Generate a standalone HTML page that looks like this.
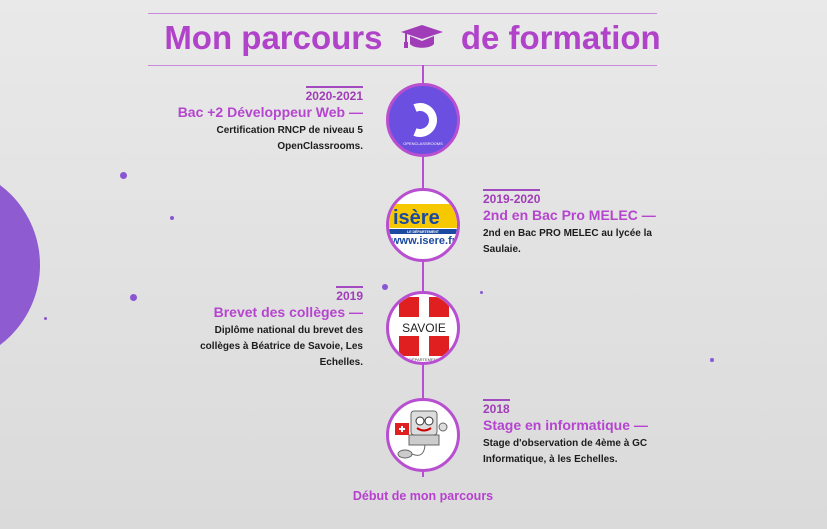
<!DOCTYPE html>
<html><head><meta charset="utf-8"><style>
*{margin:0;padding:0;box-sizing:border-box}
body{width:827px;height:529px;overflow:hidden;position:relative;background:linear-gradient(#e9e9e9,#dadada);font-family:"Liberation Sans",sans-serif}
.a{position:absolute}
.hl{position:absolute;left:148px;width:509px;height:1px;background:#c88ad8}
h1{position:absolute;left:108px;width:609px;top:19px;text-align:center;color:#b043c9;font-size:33px;font-weight:bold;white-space:nowrap;line-height:38px}
.vl{position:absolute;left:422px;top:65px;width:2px;height:412px;background:#b84fd0}
.c{position:absolute;width:74px;height:74px;border-radius:50%;border:3px solid #b84fd0;background:#fff;left:386px;overflow:hidden}
.dot{position:absolute;border-radius:50%;background:#8a55d2}
.t{position:absolute;width:200px}
.t.r{text-align:right}
.bar{display:block;width:57px;height:2px;background:#a24ac0;margin-bottom:1px}
.t.r .bar{margin-left:auto}
.y{color:#a03cb8;font-weight:bold;font-size:12px;line-height:14px}
.h{color:#b545cf;font-size:14px;font-weight:bold;line-height:18px}
.d{color:#1c1c1c;font-size:10px;font-weight:bold;line-height:16px;margin-top:2px}
</style></head><body>
<div class="a" style="left:-160px;top:165px;width:200px;height:200px;border-radius:50%;background:#8e5bd0"></div>
<div class="dot" style="left:120px;top:172px;width:7px;height:7px"></div>
<div class="dot" style="left:170px;top:216px;width:4px;height:4px"></div>
<div class="dot" style="left:130px;top:294px;width:7px;height:7px"></div>
<div class="dot" style="left:44px;top:317px;width:3px;height:3px"></div>
<div class="dot" style="left:382px;top:284px;width:6px;height:6px"></div>
<div class="dot" style="left:480px;top:291px;width:3px;height:3px"></div>
<div class="dot" style="left:710px;top:358px;width:4px;height:4px"></div>
<div class="hl" style="top:13px"></div>
<div class="hl" style="top:65px"></div>
<h1>Mon parcours <svg width="44" height="28" viewBox="0 0 44 28" style="vertical-align:-2px;margin:0 8px"><path d="M22 2 L43 9 L22 16 L1 9Z" fill="#a03cb8"/><path d="M10 13 V21 C14 26 30 26 34 21 V13 L22 18Z" fill="#a03cb8"/><path d="M6 10 V20" stroke="#a03cb8" stroke-width="2"/><rect x="4" y="19" width="4" height="6" fill="#a03cb8"/></svg> de formation</h1>
<div class="vl"></div>

<div class="c" style="top:83px;background:#6b4fe0"><svg width="68" height="68" viewBox="0 0 68 68"><path d="M26 22 A13 13 0 1 1 26 46" stroke="#fff" stroke-width="8" fill="none"/><text x="34" y="59" font-size="4" fill="#fff" text-anchor="middle" font-family="Liberation Sans">OPENCLASSROOMS</text></svg></div>
<div class="c" style="top:188px"><svg width="68" height="68" viewBox="0 0 68 68"><rect x="0" y="13" width="68" height="24" fill="#f5c800"/><text x="4" y="33" font-size="20" font-weight="bold" fill="#1b4aa0" font-family="Liberation Sans">isère</text><rect x="0" y="38" width="68" height="5" fill="#1b4aa0"/><text x="34" y="42" font-size="3.5" fill="#fff" text-anchor="middle" font-family="Liberation Sans" font-weight="bold">LE DÉPARTEMENT</text><text x="2" y="53" font-size="11" font-weight="bold" fill="#1b4aa0" font-family="Liberation Sans">www.isere.fr</text></svg></div>
<div class="c" style="top:291px"><svg width="68" height="68" viewBox="0 0 68 68"><rect x="10" y="3" width="20" height="20" fill="#e02020"/><rect x="40" y="3" width="20" height="20" fill="#e02020"/><rect x="10" y="42" width="20" height="20" fill="#e02020"/><rect x="40" y="42" width="20" height="20" fill="#e02020"/><text x="35" y="38" font-size="12" fill="#222" text-anchor="middle" font-family="Liberation Sans">SAVOIE</text><text x="35" y="67" font-size="4" fill="#444" text-anchor="middle" font-family="Liberation Sans">DÉPARTEMENT</text></svg></div>
<div class="c" style="top:398px"><svg width="68" height="68" viewBox="0 0 68 68"><rect x="22" y="10" width="26" height="24" rx="3" fill="#ddd" stroke="#666"/><circle cx="31" cy="20" r="4" fill="#fff" stroke="#333"/><circle cx="40" cy="20" r="4" fill="#fff" stroke="#333"/><path d="M28 27 Q35 32 42 27" stroke="#c00" stroke-width="2" fill="none"/><rect x="20" y="34" width="30" height="10" fill="#ccc" stroke="#666"/><rect x="6" y="22" width="14" height="12" fill="#e02020"/><path d="M13 25V31M10 28H16" stroke="#fff" stroke-width="2"/><ellipse cx="16" cy="53" rx="7" ry="4" fill="#ccc" stroke="#666"/><path d="M23 53 Q35 58 36 44" stroke="#666" fill="none"/><circle cx="54" cy="26" r="4" fill="#ddd" stroke="#666"/></svg></div>

<div class="t r" style="left:163px;top:86px"><span class="bar"></span><div class="y">2020-2021</div><div class="h">Bac +2 Développeur Web —</div><div class="d">Certification RNCP de niveau 5<br>OpenClassrooms.</div></div>
<div class="t" style="left:483px;top:189px;width:180px"><span class="bar"></span><div class="y">2019-2020</div><div class="h">2nd en Bac Pro MELEC —</div><div class="d">2nd en Bac PRO MELEC au lycée la Saulaie.</div></div>
<div class="t r" style="left:193px;top:286px;width:170px"><span class="bar" style="width:27px"></span><div class="y">2019</div><div class="h">Brevet des collèges —</div><div class="d">Diplôme national du brevet des collèges à Béatrice de Savoie, Les Echelles.</div></div>
<div class="t" style="left:483px;top:399px;width:180px"><span class="bar" style="width:27px"></span><div class="y">2018</div><div class="h">Stage en informatique —</div><div class="d">Stage d'observation de 4ème à GC Informatique, à les Echelles.</div></div>
<div class="a" style="left:340px;top:489px;width:166px;text-align:center;color:#b83fd0;font-size:12.5px;font-weight:bold">Début de mon parcours</div>
</body></html>
